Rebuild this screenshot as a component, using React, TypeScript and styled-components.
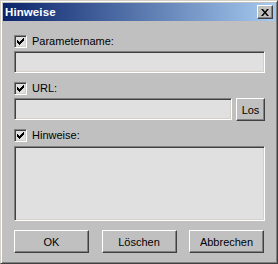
import React, { useState } from "react";
import styled, { createGlobalStyle } from "styled-components";

const GlobalStyle = createGlobalStyle`
  html, body {
    margin: 0;
    padding: 0;
    background: #c0c0c0;
  }
  body {
    font-family: "Liberation Sans", Arial, sans-serif;
  }
`;

const App = () => {
  const [param, setParam] = useState(true);
  const [url, setUrl] = useState(true);
  const [notes, setNotes] = useState(true);

  return (
    <>
      <GlobalStyle />
      <Window>
        <TitleBar>
          <Title>Hinweise</Title>
          <CloseBtn aria-label="Schließen">
            <svg width="8" height="7" viewBox="0 0 8 7">
              <path d="M0 0h2l2 2.5L6 0h2L5 3.5 8 7H6L4 4.5 2 7H0l3-3.5z" fill="#000" />
            </svg>
          </CloseBtn>
        </TitleBar>
        <Body>
          <CheckRow $top={14} onClick={() => setParam(!param)}>
            <Check checked={param} />
            <Label>Parametername:</Label>
          </CheckRow>
          <Field />
          <CheckRow $top={9} onClick={() => setUrl(!url)}>
            <Check checked={url} />
            <Label>URL:</Label>
          </CheckRow>
          <UrlRow>
            <UrlField />
            <Button $width={29}>Los</Button>
          </UrlRow>
          <CheckRow $top={8} onClick={() => setNotes(!notes)}>
            <Check checked={notes} />
            <Label>Hinweise:</Label>
          </CheckRow>
          <Notes />
          <ButtonBar>
            <Button $width={75}>OK</Button>
            <Button $width={75}>Löschen</Button>
            <Button $width={75}>Abbrechen</Button>
          </ButtonBar>
        </Body>
      </Window>
    </>
  );
};

const Check = ({ checked }: { checked: boolean }) => (
  <CheckBox>
    {checked && (
      <svg width="7" height="7" viewBox="0 0 7 7">
        <path d="M0 2h1v1h1v1h1V3h1V2h1V1h1V0h1v3H6v1H5v1H4v1H3v1H2V6H1V5H0z" fill="#000" />
      </svg>
    )}
  </CheckBox>
);

export default App;

const Window = styled.div`
  width: 278px;
  height: 264px;
  box-sizing: border-box;
  background: #c0c0c0;
  border-top: 1px solid #d4d0c8;
  border-left: 1px solid #d4d0c8;
  border-right: 1px solid #404040;
  border-bottom: 1px solid #404040;
  box-shadow: inset 1px 1px #ffffff, inset -1px -1px #808080;
  padding: 2px;
  display: flex;
  flex-direction: column;
`;

const TitleBar = styled.div`
  height: 18px;
  display: flex;
  align-items: center;
  justify-content: space-between;
  padding: 0 2px 0 2px;
  background: linear-gradient(to right, #0a246a, #a6caf0);
`;

const Title = styled.span`
  color: #ffffff;
  font-weight: bold;
  font-size: 11.5px;
  letter-spacing: 0.1px;
`;

const CloseBtn = styled.button`
  width: 16px;
  height: 14px;
  padding: 0;
  margin: 0;
  display: flex;
  align-items: center;
  justify-content: center;
  background: #c0c0c0;
  border-top: 1px solid #ffffff;
  border-left: 1px solid #ffffff;
  border-right: 1px solid #404040;
  border-bottom: 1px solid #404040;
  box-shadow: inset -1px -1px #808080;
`;

const Body = styled.div`
  flex: 1;
  display: flex;
  flex-direction: column;
  padding: 0 10px 0 11px;
`;

const CheckRow = styled.label<{ $top: number }>`
  display: flex;
  align-items: center;
  gap: 5px;
  height: 13px;
  margin-top: ${p => p.$top}px;
  cursor: default;
`;

const CheckBox = styled.span`
  width: 13px;
  height: 13px;
  box-sizing: border-box;
  display: flex;
  align-items: center;
  justify-content: center;
  background: #e0e0e0;
  border-top: 1px solid #808080;
  border-left: 1px solid #808080;
  border-right: 1px solid #ffffff;
  border-bottom: 1px solid #ffffff;
  box-shadow: inset 1px 1px #404040, inset -1px -1px #d4d0c8;
`;

const Label = styled.span`
  font-size: 11px;
  color: #000000;
  line-height: 13px;
`;

const sunken = `
  box-sizing: border-box;
  background: #e0e0e0;
  border-top: 1px solid #808080;
  border-left: 1px solid #808080;
  border-right: 1px solid #ffffff;
  border-bottom: 1px solid #ffffff;
  box-shadow: inset 1px 1px #404040, inset -1px -1px #d4d0c8;
  outline: none;
  font-family: "Liberation Sans", Arial, sans-serif;
  font-size: 11px;
  padding: 2px 3px;
  margin: 0;
`;

const Field = styled.input`
  ${sunken}
  height: 22px;
  width: 100%;
  margin-top: 3px;
  flex: none;
`;

const UrlField = styled.input`
  ${sunken}
  height: 22px;
  flex: 1;
  min-width: 0;
`;

const UrlRow = styled.div`
  display: flex;
  align-items: flex-start;
  gap: 4px;
  margin-top: 3px;
  height: 23px;
  flex: none;
`;

const Notes = styled.textarea`
  ${sunken}
  height: 75px;
  width: 100%;
  margin-top: 4px;
  resize: none;
  flex: none;
`;

const ButtonBar = styled.div`
  display: flex;
  justify-content: space-between;
  margin-top: 9px;
  padding-right: 1px;
  flex: none;
`;

const Button = styled.button<{ $width: number }>`
  width: ${p => p.$width}px;
  height: 23px;
  padding: 0;
  box-sizing: border-box;
  background: #c0c0c0;
  color: #000000;
  font-family: "Liberation Sans", Arial, sans-serif;
  font-size: 11px;
  border-top: 1px solid #ffffff;
  border-left: 1px solid #ffffff;
  border-right: 1px solid #404040;
  border-bottom: 1px solid #404040;
  box-shadow: inset -1px -1px #808080;
  flex-shrink: 0;
`;
